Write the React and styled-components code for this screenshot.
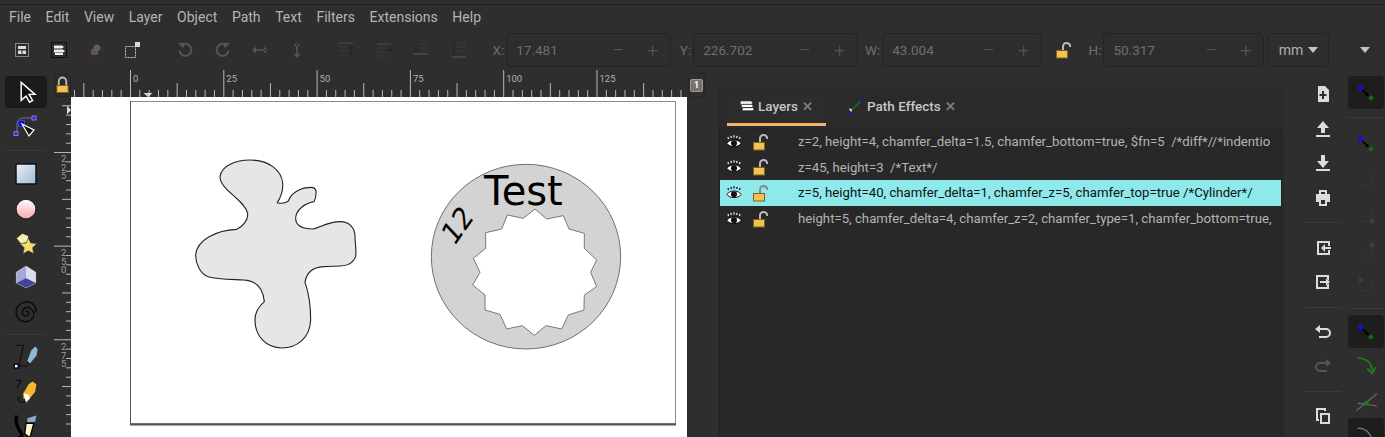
import React from "react";
import styled, { createGlobalStyle } from "styled-components";

const GlobalStyle = createGlobalStyle`
  html, body {
    margin: 0;
    padding: 0;
    background: #2e2e2e;
  }
  * {
    box-sizing: border-box;
  }
`;

const Window = styled.div`
  width: 1385px;
  height: 437px;
  overflow: hidden;
  display: flex;
  flex-direction: column;
  background: #2e2e2e;
  color: #bdbdbd;
  font-family: Roboto, "Liberation Sans", sans-serif;
`;

const MenuBar = styled.div`
  height: 26px;
  margin-top: 4px;
  flex: none;
  display: flex;
  align-items: center;
  padding-left: 9px;
  gap: 14.6px;
  font-size: 14px;
  color: #b4b4b4;
  border-top: 1px solid #222;
  border-bottom: 1px solid #2a2a2a;
`;

const Toolbar = styled.div`
  height: 40px;
  flex: none;
  display: flex;
  align-items: center;
  padding-left: 3px;
`;

const ToolbarIcon = styled.div`
  width: 37.2px;
  height: 34px;
  flex: none;
  display: flex;
  align-items: center;
  justify-content: center;
  padding-left: ${(p) => p.$nudge || 0}px;
`;

const ToolbarSep = styled.div`
  width: 1px;
  height: 34px;
  flex: none;
  margin: 0 ${(p) => p.$gap || 6}px;
  background: #2a2a2a;
`;

const FieldLabel = styled.span`
  font-size: 13.5px;
  color: #6e6e6e;
  flex: none;
  width: ${(p) => p.$w}px;
  text-align: right;
  padding-right: 2px;
`;

const Field = styled.div`
  width: ${(p) => p.$w}px;
  height: 34px;
  flex: none;
  display: flex;
  align-items: center;
  padding-left: 9px;
  border: 1px solid #232323;
  border-radius: 5px;
  background: #2d2d2d;
  font-size: 13.5px;
  color: #6f6f6f;
`;

const FieldValue = styled.span`
  flex: 1;
`;

const Stepper = styled.span`
  width: 35px;
  text-align: center;
  font-size: 20px;
  font-weight: 300;
  color: #555;
`;

const UnitBox = styled.div`
  width: 62px;
  height: 34px;
  margin-left: 3px;
  flex: none;
  display: flex;
  align-items: center;
  justify-content: center;
  gap: 5px;
  border: 1px solid #232323;
  border-radius: 5px;
  font-size: 14px;
  color: #b0b0b0;
`;

const Caret = styled.span`
  width: 0;
  height: 0;
  border-left: 5px solid transparent;
  border-right: 5px solid transparent;
  border-top: 6px solid #c4c4c4;
`;

const Main = styled.div`
  flex: 1;
  min-height: 0;
  display: flex;
`;

const ToolColumn = styled.div`
  width: 54px;
  flex: none;
  display: flex;
  flex-direction: column;
  align-items: center;
  padding: 6px 2px 0 0;
`;

const ToolButton = styled.div`
  width: 42px;
  height: ${(p) => p.$h || 34.4}px;
  flex: none;
  display: flex;
  align-items: center;
  justify-content: center;
  border-radius: 4px;
  background: ${(p) => (p.$active ? "#1b1b1b" : "transparent")};
`;

const ToolSep = styled.div`
  width: 42px;
  height: 1px;
  flex: none;
  margin: ${(p) => p.$m || 6}px 0;
  background: #383838;
`;

const CanvasArea = styled.div`
  width: 633px;
  flex: none;
  display: grid;
  grid-template-columns: 17px 1fr;
  grid-template-rows: 27px 1fr;
  min-height: 0;
`;

const CornerButton = styled.div`
  margin-top: 3px;
  border: 1px solid #262626;
  border-radius: 4px;
  display: flex;
  align-items: center;
  justify-content: center;
  background: #2b2b2b;
`;

const RulerSvg = styled.svg`
  display: block;
  overflow: hidden;
`;

const Paper = styled.svg`
  display: block;
  background: #fff;
`;

const SideGap = styled.div`
  width: 31px;
  flex: none;
  padding-top: 3px;
`;

const PageBadge = styled.div`
  width: 17px;
  height: 24px;
  margin-left: 1px;
  border: 1px solid #262626;
  border-radius: 4px;
  display: flex;
  align-items: center;
  justify-content: center;
`;

const BadgeNumber = styled.span`
  width: 13px;
  height: 13px;
  border-radius: 2px;
  border: 1px solid #9a9a9a;
  background: #77726e;
  color: #fff;
  font-size: 9px;
  font-weight: 700;
  line-height: 11px;
  text-align: center;
`;

const DockPanel = styled.div`
  width: 566px;
  flex: none;
  margin-top: 18px;
  display: flex;
  flex-direction: column;
  background: #2a2a2a;
  border: 1px solid #292929;
  border-bottom: none;
`;

const TabBar = styled.div`
  height: 37px;
  flex: none;
  display: flex;
  padding-left: 8px;
`;

const Tab = styled.div`
  width: ${(p) => p.$w}px;
  height: 37px;
  flex: none;
  display: flex;
  align-items: center;
  padding-left: ${(p) => p.$pad}px;
  gap: 3px;
  white-space: nowrap;
  font-size: 13.5px;
  font-weight: 500;
  color: #c6c6c6;
  background: ${(p) => (p.$active ? "#2c2c2c" : "transparent")};
  border-bottom: 3px solid ${(p) => (p.$active ? "#f6b26b" : "transparent")};
`;

const TabClose = styled.span`
  margin-left: 1px;
  color: #7d7d7d;
  font-size: 13px;
  font-weight: 700;
`;

const LayerList = styled.div`
  flex: 1;
  margin: 2px 1px 0 0;
  background: #282828;
  border: 1px solid #232323;
  border-bottom: none;
  overflow: hidden;
`;

const LayerRow = styled.div`
  height: 25.6px;
  display: flex;
  align-items: center;
  white-space: pre;
  overflow: hidden;
  font-size: 13.2px;
  color: ${(p) => (p.$selected ? "#111" : "#b4b4b4")};
  background: ${(p) => (p.$selected ? "#8ee9ea" : "transparent")};
`;

const LayerIcons = styled.div`
  width: 78px;
  flex: none;
  display: flex;
  align-items: center;
  gap: 11px;
  padding-left: 6px;
`;

const SideBar = styled.div`
  width: 62px;
  flex: none;
  display: flex;
  flex-direction: column;
  align-items: center;
  padding: 7px 0 0 15px;
`;

const SnapBar = styled.div`
  width: 39px;
  flex: none;
  display: flex;
  flex-direction: column;
  align-items: flex-end;
  padding: 6px 1px 0 0;
`;

const SideButton = styled.div`
  width: 36px;
  height: ${(p) => p.$h || 34.6}px;
  flex: none;
  display: flex;
  align-items: center;
  justify-content: center;
  border-radius: 4px;
  background: ${(p) => (p.$active ? "#1d1d1d" : "transparent")};
`;

const SideSep = styled.div`
  width: 36px;
  height: 1px;
  flex: none;
  margin: ${(p) => p.$m || 7}px 0;
  background: #3a3a3a;
`;

/* drawn icons */
const Svg = ({ s = 20, children }) => (
  <svg width={s} height={s} viewBox="0 0 20 20">
    {children}
  </svg>
);

const Lock = ({ open, color = "#b9b9b9" }) => (
  <svg width="16" height="20" viewBox="0 0 16 20">
    {open ? (
      <path d="M7 11V6.500a3.600 3.600 0 0 1 7.200 0V7" fill="none" stroke={color} strokeWidth="2" />
    ) : (
      <path d="M4 11V6a4 4 0 0 1 8 0v5" fill="none" stroke={color} strokeWidth="2" />
    )}
    <rect x={open ? 0.5 : 2} y="10.500" width={open ? 11 : 12} height="7.500" fill="#f3c24f" stroke="#7c6320" />
  </svg>
);

const Eye = ({ dark }) => (
  <svg width="16" height="14" viewBox="0 0 18 15">
    <path d="M1 9c3-5 13-5 16 0-3 5-13 5-16 0z" fill="#fff" stroke="#000" />
    <circle cx="9" cy="9" r="3.400" fill="#111" />
    <path d="M3 4L2 2M6 3L5.500 .5M9 2.500V0M12 3l.5-2.500M15 4l1-2" stroke={dark ? "#111" : "#eee"} strokeWidth="1.400" />
  </svg>
);

const LayersIcon = ({ s = 20 }) => (
  <Svg s={s}>
    <path d="M2 4h13l2 2-2 2H2z" fill="#eee" />
    <path d="M3 8h13l2 2-2 2H3zM4 12h13l2 2-2 2H4z" fill="#fff" stroke="#111" strokeWidth=".8" />
  </Svg>
);

const NodeArrow = () => (
  <Svg>
    <circle cx="4.500" cy="5" r="2.800" fill="#1212c8" />
    <path d="M6.500 7l5 5" stroke="#000" strokeWidth="1.600" />
    <path d="M13 13.500l-4-1 3-3z" fill="#000" />
    <path d="M15 12l3 3-3 3-3-3z" fill="#0d6b14" />
  </Svg>
);

const DimSnap = ({ cx, cy }) => (
  <Svg>
    <path d="M4 16h12V4" fill="none" stroke="#3c3c3c" strokeDasharray="1.500 1.500" />
    {cx && <circle cx={cx} cy={cy} r="2.500" fill="#2f4a31" />}
  </Svg>
);

const Cmd = ({ d, dim }) => (
  <Svg>
    <path d={d} fill={dim ? "#555" : "#dcdcdc"} fillRule="evenodd" />
  </Svg>
);

const dim = "#555";

const Ruler = () => {
  const ticks = [];
  for (let i = -6; i < 60; i++) {
    const x = 59.500 + i * 9.33;
    const h = i % 10 === 0 ? 27 : i % 5 === 0 ? 14 : 7;
    ticks.push(<path key={i} d={`M${x} 25V${25 - h}`} stroke="#b8b8b8" strokeWidth="1" />);
  }
  return (
    <RulerSvg width="616" height="27" viewBox="0 -2 616 27">
      {ticks}
      {[0, 25, 50, 75, 100, 125].map((n, i) => (
        <text key={n} x={62 + i * 93.3} y="9.500" fontSize="9.500" fill="#b0b0b0" fontFamily="Roboto">
          {n}
        </text>
      ))}
      <path d="M72.500 21h9l-4.500 4z" fill="#d8d8d8" />
    </RulerSvg>
  );
};

const SideRuler = () => {
  const ticks = [];
  const labels = [
    [153, "225"],
    [247, "250"],
    [341, "275"],
  ];
  for (let i = 0; i < 36; i++) {
    const y = 97 + (i * 9.36 - 0.6);
    const n = i - 6;
    const h = n % 10 === 0 ? 17 : n % 5 === 0 ? 9 : 5;
    ticks.push(<path key={i} d={`M17 ${y}h-${h}`} stroke="#b8b8b8" strokeWidth="1" />);
  }
  return (
    <RulerSvg width="17" height="340" viewBox="0 97 17 340">
      {ticks}
      {labels.map(([y, t]) =>
        t.split("").map((c, i) => (
          <text key={y + i} x="7" y={y + 9 + i * 8.500} fontSize="9.500" fill="#9c9c9c" fontFamily="Roboto">
            {c}
          </text>
        ))
      )}
      <path d="M13 105.500v9l4-4.500z" fill="#d8d8d8" />
    </RulerSvg>
  );
};

const Drawing = () => (
  <Paper width="616" height="340" viewBox="71 97 616 340">
    <rect x="130.500" y="101.500" width="545" height="322" fill="#fff" stroke="#8a8a8a" />
    <path d="M130.500 101v322.500" stroke="#555" />
    <path d="M130 424.500h546" stroke="#555" strokeWidth="2" />
    <g transform="translate(180 150) scale(.3333)">
      <path
        d="M120 80C125 45 170 30 210 30C265 30 305 60 308 100C310 125 300 145 292 158C305 162 318 158 325 153C335 125 365 112 395 112C405 112 410 122 408 130C408 142 405 150 402 155C375 160 347 180 347 205C347 225 365 237 400 237C420 232 445 215 480 215C510 215 525 235 525 260C525 280 530 300 527 320C520 340 505 348 480 348C450 350 440 349 430 350C400 352 380 365 375 397C385 425 392 460 392 510C390 565 350 594 305 594C260 594 225 560 225 510C225 490 235 470 253 455C250 420 235 392 190 390C150 388 110 388 85 380C60 372 47 340 47 315C50 270 110 240 170 238C190 228 205 210 203 190C195 150 120 120 120 80Z"
        fill="#e6e6e6"
        stroke="#222"
        strokeWidth="3.300"
      />
    </g>
    <g transform="translate(425 155) scale(.3333)">
      <ellipse cx="303" cy="305" rx="284" ry="277" fill="#d3d3d3" stroke="#6f6f6f" strokeWidth="3" />
      <polygon
        points="330,162 365,192 415,182 432,222 478,235 478,280 515,315 497,352 515,395 478,420 477,465 430,480 410,522 363,512 328,541 292,512 245,522 225,478 180,465 180,420 143,390 165,352 145,310 182,280 182,233 230,222 247,180 295,190"
        fill="#fff"
        stroke="#777"
        strokeWidth="3"
      />
    </g>
    <text x="484" y="205" fontFamily="DejaVu Sans" fontSize="40" fill="#000">
      Test
    </text>
    <text
      transform="translate(454 247) rotate(-55) skewX(-12)"
      fontFamily="DejaVu Sans"
      fontSize="28"
      fill="#000"
    >
      12
    </text>
  </Paper>
);

const layers = [
  "z=2, height=4, chamfer_delta=1.5, chamfer_bottom=true, $fn=5  /*diff*//*indentio",
  "z=45, height=3  /*Text*/",
  "z=5, height=40, chamfer_delta=1, chamfer_z=5, chamfer_top=true /*Cylinder*/",
  "height=5, chamfer_delta=4, chamfer_z=2, chamfer_type=1, chamfer_bottom=true,",
];

const fileCmds = [
  "M5 2h7l4 4v12H5zM9 7v3H6.500v2H9v3h2v-3h2.500v-2H11V7z",
  "M10 2l6 7h-4v5H8V9H4zM3 16h14v2H3z",
  "M8 2h4v6h4l-6 7-6-7h4zM3 16h14v2H3z",
  "M6 2h8v4h3v8h-3v4H6v-4H3V6h3zM8 4v2h4V4zM8 12v4h4v-4z",
];

export default function App() {
  return (
    <Window>
      <GlobalStyle />
      <MenuBar>
        {["File", "Edit", "View", "Layer", "Object", "Path", "Text", "Filters", "Extensions", "Help"].map((m) => (
          <span key={m}>{m}</span>
        ))}
      </MenuBar>
      <Toolbar>
        <ToolbarIcon>
          <Svg>
            <rect x="3.500" y="3.500" width="13" height="13" fill="none" stroke="#ddd" strokeDasharray="1 1" />
            <path d="M6 6h8v3H6zM6 10.500h3.500V14H6zM10.500 10.500H14V14h-3.500z" fill="#ddd" />
          </Svg>
        </ToolbarIcon>
        <ToolbarIcon>
          <Svg>
            <rect x="2.500" y="2.500" width="15" height="15" fill="none" stroke="#000" strokeDasharray="2 1" />
            <path d="M5 5.500h8l2 1.500-2 1.500H5zM5 9.500h9l2 1.500-2 1.500H5zM6 13h8v2H6z" fill="#eee" />
          </Svg>
        </ToolbarIcon>
        <ToolbarIcon>
          <Svg>
            <rect x="2.500" y="2.500" width="15" height="15" fill="none" stroke="#4d2a2a" strokeDasharray="2 1" />
            <path d="M5 9h7v6H5z" fill="#5e5747" />
            <circle cx="11" cy="8" r="3.500" fill="#5e5e5e" />
          </Svg>
        </ToolbarIcon>
        <ToolbarIcon>
          <Svg>
            <rect x="2.500" y="6.500" width="10" height="11" fill="none" stroke="#c4c4c4" strokeDasharray="2 1" />
            <rect x="12" y="2" width="5" height="5" fill="#d8d8d8" />
          </Svg>
        </ToolbarIcon>
        <ToolbarSep $gap={7} />
        <ToolbarIcon>
          <Svg>
            <path d="M5.500 6.500a6 6 0 1 1-1 4" fill="none" stroke={dim} strokeWidth="2" />
            <path d="M3 3h6v5z" fill={dim} />
          </Svg>
        </ToolbarIcon>
        <ToolbarIcon>
          <Svg>
            <path d="M14.500 6.500a6 6 0 1 0 1 4" fill="none" stroke={dim} strokeWidth="2" />
            <path d="M17 3h-6v5z" fill={dim} />
          </Svg>
        </ToolbarIcon>
        <ToolbarIcon>
          <Svg>
            <path d="M3 9.200h14v1.600H3zM6 6.500v7L2 10zM14 6.500v7l4-3.500z" fill={dim} />
          </Svg>
        </ToolbarIcon>
        <ToolbarIcon>
          <Svg>
            <path d="M9.200 3h1.600v14H9.200zM6.500 6h7L10 2zM6.500 14h7L10 18z" fill={dim} />
          </Svg>
        </ToolbarIcon>
        <ToolbarSep $gap={6} />
        <ToolbarIcon>
          <Svg>
            <path d="M2 3h14" stroke="#4d4d4d" />
            <path d="M2 7h9M2 11h9M2 15h9" stroke="#3a3a3a" />
            <path d="M14 17V6M11.500 8l2.500-3 2.500 3" stroke="#232323" fill="none" />
          </Svg>
        </ToolbarIcon>
        <ToolbarIcon>
          <Svg>
            <path d="M3 4h14" stroke="#4d4d4d" />
            <path d="M3 8h10M3 12h8M3 16h10" stroke="#3a3a3a" />
            <path d="M12 10h6M16 8l2 2-2 2" stroke="#232323" fill="none" />
          </Svg>
        </ToolbarIcon>
        <ToolbarIcon>
          <Svg>
            <path d="M8 4h9M8 8h9" stroke="#3a3a3a" />
            <path d="M3 14h14" stroke="#6a5f42" />
            <path d="M3 10h6M5 8l-2 2 2 2" stroke="#232323" fill="none" />
          </Svg>
        </ToolbarIcon>
        <ToolbarIcon>
          <Svg>
            <path d="M8 3h9M8 7h9M8 11h9" stroke="#3a3a3a" />
            <path d="M3 17h14" stroke="#6a5a30" />
            <path d="M5 3v11M3 12l2 3 2-3" stroke="#232323" fill="none" />
          </Svg>
        </ToolbarIcon>
        <ToolbarSep $gap={3} />
        <FieldLabel $w={22}>X:</FieldLabel>
        <Field $w={165}>
          <FieldValue>17.481</FieldValue>
          <Stepper>−</Stepper>
          <Stepper>+</Stepper>
        </Field>
        <FieldLabel $w={22}>Y:</FieldLabel>
        <Field $w={165}>
          <FieldValue>226.702</FieldValue>
          <Stepper>−</Stepper>
          <Stepper>+</Stepper>
        </Field>
        <FieldLabel $w={24}>W:</FieldLabel>
        <Field $w={160}>
          <FieldValue>43.004</FieldValue>
          <Stepper>−</Stepper>
          <Stepper>+</Stepper>
        </Field>
        <ToolbarIcon $nudge={7}>
          <Lock open />
        </ToolbarIcon>
        <FieldLabel $w={24}>H:</FieldLabel>
        <Field $w={161}>
          <FieldValue>50.317</FieldValue>
          <Stepper>−</Stepper>
          <Stepper>+</Stepper>
        </Field>
        <UnitBox>
          mm <Caret />
        </UnitBox>
        <ToolbarSep $gap={8} />
        <ToolbarIcon>
          <Caret />
        </ToolbarIcon>
      </Toolbar>
      <Main>
        <ToolColumn>
          <ToolButton $active $h={32}>
            <Svg s={24}>
              <path d="M6 2v15l4-3.500 3 5 2.500-1.500-3-5h5z" fill="#111" stroke="#fff" strokeWidth="1.200" />
            </Svg>
          </ToolButton>
          <ToolButton $h={36}>
            <svg width="26" height="26" viewBox="0 0 26 26">
              <path d="M4 21V11a6 6 0 0 1 6-6h10" fill="none" stroke="#777" />
              <rect x="1" y="18.500" width="4" height="4" fill="#3434aa" stroke="#7878ff" />
              <rect x="19" y="3" width="4" height="4" fill="#3434aa" stroke="#7878ff" />
              <rect x="5.500" y="7.500" width="6" height="6" fill="#1010aa" stroke="#3838ff" />
              <path d="M9 11l12 6-5 6z" fill="#111" stroke="#fff" strokeWidth="1.200" />
            </svg>
          </ToolButton>
          <ToolSep $m={6} />
          <ToolButton>
            <Svg s={22}>
              <defs>
                <linearGradient id="rectFill" x1="0" y1="0" x2="1" y2="1">
                  <stop offset="0" stopColor="#e8eef5" />
                  <stop offset="1" stopColor="#9fbcd6" />
                </linearGradient>
              </defs>
              <rect x="1" y="1" width="18" height="18" fill="url(#rectFill)" stroke="#000" />
            </Svg>
          </ToolButton>
          <ToolButton>
            <Svg s={22}>
              <defs>
                <linearGradient id="ballFill" x1="0" y1="0" x2="0" y2="1">
                  <stop offset="0" stopColor="#ffffff" />
                  <stop offset="1" stopColor="#f7a8ae" />
                </linearGradient>
              </defs>
              <circle cx="10" cy="10" r="9" fill="url(#ballFill)" stroke="#222" />
            </Svg>
          </ToolButton>
          <ToolButton>
            <Svg s={24}>
              <path d="M2 6l5-4 5 2 0 5-6 2z" fill="#f7eeb0" stroke="#333" strokeWidth=".5" />
              <path d="M12 6l2 4 5 .5-3.500 3.500 1 5-4.500-2.500L7.500 19l1-5L5 10.500l5-.5z" fill="#f5dc6a" stroke="#333" strokeWidth=".5" />
            </Svg>
          </ToolButton>
          <ToolButton>
            <Svg s={24}>
              <path d="M10 1l8 5v9l-8 4-8-4V6z" fill="#a8a8d8" stroke="#ddd" strokeWidth=".6" />
              <path d="M10 1l8 5v9l-8-4z" fill="#dcdcf0" />
              <path d="M2 15l8-4 8 4-8 4z" fill="#44449a" />
            </Svg>
          </ToolButton>
          <ToolButton>
            <Svg s={24}>
              <path
                d="M10 10c1-1.500 3 0 2 2s-5 1.500-5-1.500 3-5.500 6-4 4.500 5 3 8-6 4.500-9.500 3S1 12 2 8s6-7 10-6.500 7 4.500 6.500 9"
                fill="none"
                stroke="#0c0c0c"
                strokeWidth="1.200"
              />
            </Svg>
          </ToolButton>
          <ToolSep $m={5} />
          <ToolButton>
            <Svg s={26}>
              <path d="M2 1h6L6 10l-1 7h6" fill="none" stroke="#111" />
              <path d="M11 13l3-8 3-3 2 2-1 5-5 6z" fill="#8fb8d4" />
              <path d="M11 13l2 2-2 3-1-1z" fill="#222" />
              <rect x="1" y="15.500" width="3" height="3" fill="#fff" stroke="#000" />
            </Svg>
          </ToolButton>
          <ToolButton>
            <Svg s={26}>
              <path d="M2 1h4L3 7M5 13c-3 4 1 6 5 4" fill="none" stroke="#111" />
              <path d="M8 11l4-7 3-2 3 2-1 6-5 6-4-1z" fill="#f7b733" />
              <path d="M8 11l4 1 1 3-3 3z" fill="#fff" />
            </Svg>
          </ToolButton>
          <ToolButton>
            <Svg s={26}>
              <path d="M3 2c-2 5 1 10 3 13s-1 4-2 4" fill="none" stroke="#000" strokeWidth="2.500" />
              <path d="M11 4l7-2-1 5-6 0z" fill="#8aa8c8" />
              <path d="M10 8h6l-3 11-4-3z" fill="#fff3c4" stroke="#000" />
            </Svg>
          </ToolButton>
        </ToolColumn>
        <CanvasArea>
          <CornerButton>
            <Lock />
          </CornerButton>
          <Ruler />
          <SideRuler />
          <Drawing />
        </CanvasArea>
        <SideGap>
          <PageBadge>
            <BadgeNumber>1</BadgeNumber>
          </PageBadge>
        </SideGap>
        <DockPanel>
          <TabBar>
            <Tab $active $w={99} $pad={12}>
              <LayersIcon s={16} />
              Layers
              <TabClose>✕</TabClose>
            </Tab>
            <Tab $w={130} $pad={22}>
              <Svg s={16}>
                <path d="M3 16L16 4" stroke="#176b1c" strokeWidth="2" />
                <path d="M1 13l4 1-1 4z" fill="#e8e8e8" />
                <circle cx="2" cy="18" r="1.500" fill="#1414e0" />
                <circle cx="17" cy="3" r="1.500" fill="#1414e0" />
              </Svg>
              Path Effects
              <TabClose>✕</TabClose>
            </Tab>
          </TabBar>
          <LayerList>
            {layers.map((text, i) => (
              <LayerRow key={text} $selected={i === 2}>
                <LayerIcons>
                  <Eye dark={i === 2} />
                  <Lock open color={i === 2 ? "#888" : "#bbb"} />
                </LayerIcons>
                {text}
              </LayerRow>
            ))}
          </LayerList>
        </DockPanel>
        <SideBar>
          {fileCmds.map((d) => (
            <SideButton key={d}>
              <Cmd d={d} />
            </SideButton>
          ))}
          <SideSep $m={7} />
          <SideButton>
            <Cmd d="M4 3h13v5h-2V5H6v10h9v-3h2v5H4zM8 10l4-4v3h6v2h-6v3z" />
          </SideButton>
          <SideButton>
            <Cmd d="M3 3h13v5h-2V5H5v10h9v-3h2v5H3zM17 10l-4-4v3H7v2h6v3z" />
          </SideButton>
          <SideSep $m={7} />
          <SideButton>
            <Cmd d="M7 3v3h6a5 5 0 0 1 0 10H6v-2h7a3 3 0 0 0 0-6H7v3L2 7z" />
          </SideButton>
          <SideButton>
            <Cmd dim d="M13 3v3H7a5 5 0 0 0 0 10h7v-2H7a3 3 0 0 1 0-6h6v3l5-4z" />
          </SideButton>
          <SideSep $m={7} />
          <SideButton>
            <Cmd d="M7 7h10v11H7zM9 9v7h6V9zM3 2h10v3h-2V4H5v9h1v2H3z" />
          </SideButton>
        </SideBar>
        <SnapBar>
          <SideButton $active $h={33}>
            <NodeArrow />
          </SideButton>
          <SideSep $m={8} />
          <SideButton $h={35.5}>
            <NodeArrow />
          </SideButton>
          <SideButton $h={35.5}>
            <DimSnap />
          </SideButton>
          <SideButton $h={35}>
            <DimSnap cx={16} cy={16} />
          </SideButton>
          <SideButton $h={35}>
            <DimSnap cx={16} cy={5} />
          </SideButton>
          <SideButton $h={35}>
            <DimSnap cx={5} cy={5} />
          </SideButton>
          <SideSep $m={6} />
          <SideButton $active $h={33}>
            <NodeArrow />
          </SideButton>
          <SideButton $h={35}>
            <Svg s={24}>
              <path d="M3 3c8 1 12 5 12 11" fill="none" stroke="#1d7a1d" strokeWidth="1.600" />
              <path d="M11 12l4 4 3-5" fill="none" stroke="#1d7a1d" strokeWidth="1.600" />
            </Svg>
          </SideButton>
          <SideButton $h={35}>
            <Svg s={24}>
              <path d="M2 18L19 4M3 12c6 0 12 2 16 2" fill="none" stroke="#6a6a6a" />
              <circle cx="10" cy="12" r="2" fill="#1d7a1d" />
            </Svg>
          </SideButton>
          <SideButton $active $h={30}>
            <Svg s={24}>
              <path d="M3 6c6 0 10 3 12 9" fill="none" stroke="#777" />
            </Svg>
          </SideButton>
        </SnapBar>
      </Main>
    </Window>
  );
}
